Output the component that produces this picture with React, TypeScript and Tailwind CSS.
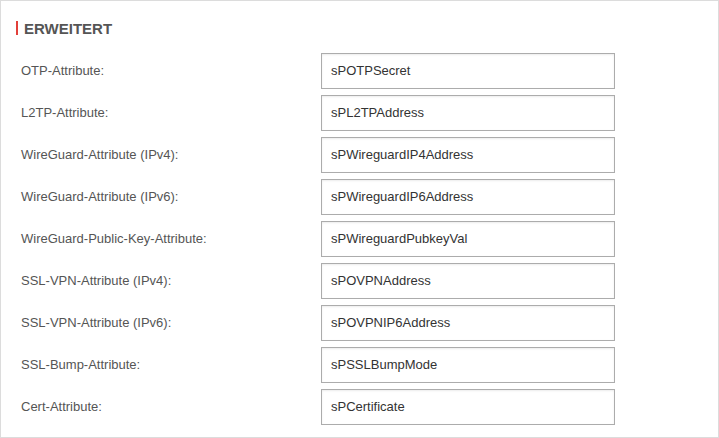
import React from "react";

const rows: [string, string][] = [
  ["OTP-Attribute:", "sPOTPSecret"],
  ["L2TP-Attribute:", "sPL2TPAddress"],
  ["WireGuard-Attribute (IPv4):", "sPWireguardIP4Address"],
  ["WireGuard-Attribute (IPv6):", "sPWireguardIP6Address"],
  ["WireGuard-Public-Key-Attribute:", "sPWireguardPubkeyVal"],
  ["SSL-VPN-Attribute (IPv4):", "sPOVPNAddress"],
  ["SSL-VPN-Attribute (IPv6):", "sPOVPNIP6Address"],
  ["SSL-Bump-Attribute:", "sPSSLBumpMode"],
  ["Cert-Attribute:", "sPCertificate"],
];

export default function App() {
  return (
    <div
      className="w-[719px] h-[438px] bg-white border border-[#dcdcdc] box-border"
      style={{ fontFamily: '"Liberation Sans", Arial, sans-serif' }}
    >
      <div className="flex items-center h-[14px] mt-[20px] ml-[15px]">
        <div className="w-[2px] h-[14px] bg-[#e2403a]" />
        <div className="ml-[6px] text-[15px] font-bold text-[#555555] leading-none tracking-[0px]">
          ERWEITERT
        </div>
      </div>
      <div className="mt-[18px] flex flex-col gap-[6px] pl-[20px]">
        {rows.map(([label, value]) => (
          <div key={label} className="flex items-center h-[36px]">
            <div className="w-[300px] text-[13px] text-[#555555]">{label}</div>
            <div className="w-[294px] h-[36px] border border-[#acacac] box-border flex items-center pl-[9px] text-[13px] text-[#333333] shadow-[inset_0_1px_2px_rgba(0,0,0,0.08)]">
              {value}
            </div>
          </div>
        ))}
      </div>
    </div>
  );
}
